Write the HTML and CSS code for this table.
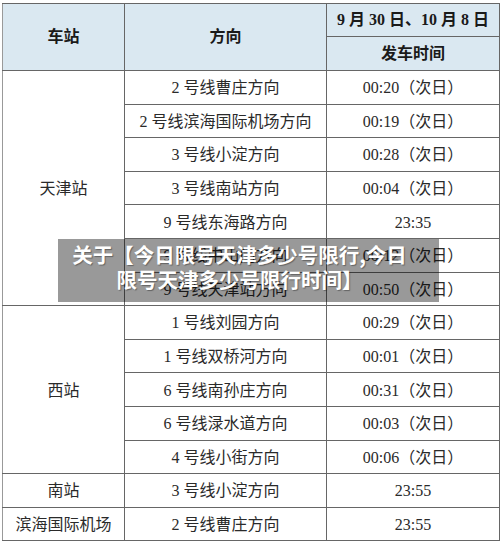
FILE: index.html
```html
<!DOCTYPE html>
<html lang="zh-CN">
<head>
<meta charset="utf-8">
<link rel="stylesheet" href="styles.css">
</head>
<body>
<div class="wrap">
  <table class="tt">
    <colgroup><col class="c1"><col class="c2"><col class="c3"></colgroup>
    <thead>
      <tr class="h1">
        <th rowspan="2" class="hd">车站</th>
        <th rowspan="2" class="hd">方向</th>
        <th class="hd date">9 月 30 日、10 月 8 日</th>
      </tr>
      <tr class="h2"><th class="hd">发车时间</th></tr>
    </thead>
    <tbody>
      <tr><td rowspan="7" class="st">天津站</td><td>2 号线曹庄方向</td><td>00:20（次日）</td></tr>
      <tr><td>2 号线滨海国际机场方向</td><td>00:19（次日）</td></tr>
      <tr><td>3 号线小淀方向</td><td>00:28（次日）</td></tr>
      <tr><td>3 号线南站方向</td><td>00:04（次日）</td></tr>
      <tr><td>9 号线东海路方向</td><td>23:35</td></tr>
      <tr><td>9 号线中山门方向</td><td>00:12（次日）</td></tr>
      <tr><td>9 号线天津站方向</td><td>00:50（次日）</td></tr>
      <tr><td rowspan="5" class="st">西站</td><td>1 号线刘园方向</td><td>00:29（次日）</td></tr>
      <tr><td>1 号线双桥河方向</td><td>00:01（次日）</td></tr>
      <tr><td>6 号线南孙庄方向</td><td>00:31（次日）</td></tr>
      <tr><td>6 号线渌水道方向</td><td>00:03（次日）</td></tr>
      <tr><td>4 号线小街方向</td><td>00:06（次日）</td></tr>
      <tr><td class="st">南站</td><td>3 号线小淀方向</td><td>23:55</td></tr>
      <tr><td class="st">滨海国际机场</td><td>2 号线曹庄方向</td><td>23:55</td></tr>
    </tbody>
  </table>
  <div class="overlay">关于【今日限号天津多少号限行,今日<br>限号天津多少号限行时间】</div>
</div>
</body>
</html>
```

FILE: styles.css
```css
html, body {
  margin: 0;
  padding: 0;
  background: #fff;
}
.wrap {
  position: relative;
  padding: 3px 0 0 2px;
  width: 500px;
  box-sizing: border-box;
}
.tt {
  border-collapse: collapse;
  width: 497px;
  table-layout: fixed;
  font-family: "Liberation Serif", "Noto Sans CJK SC", serif;
  font-size: 16px;
  color: #2a2a2a;
}
.c1 { width: 122px; }
.c2 { width: 202px; }
.c3 { width: 173px; }
.tt th, .tt td {
  border: 1px solid #666;
  text-align: center;
  vertical-align: middle;
  padding: 0;
  line-height: 18px;
}
.tt th:first-child, .tt td.st {
  border-left-color: #999;
}
.hd {
  background: #dae8f1;
  font-weight: bold;
  font-size: 16px;
  color: #1a1a1a;
}
.h1 { height: 33px; }
.h2 { height: 34px; }
.tt tbody tr { height: 33.6px; }
.tt tbody td { padding-top: 2px; }
.overlay {
  position: absolute;
  left: 58px;
  top: 239px;
  width: 381px;
  height: 63px;
  box-sizing: border-box;
  padding: 3px 18px 0 0;
  background: rgba(0, 0, 0, 0.4);
  color: #fff;
  font-family: "Noto Sans CJK SC", sans-serif;
  font-weight: bold;
  font-size: 20.5px;
  line-height: 25px;
  text-align: center;
  text-shadow: 1px 1px 1px rgba(0, 0, 0, 0.35);
}
```
